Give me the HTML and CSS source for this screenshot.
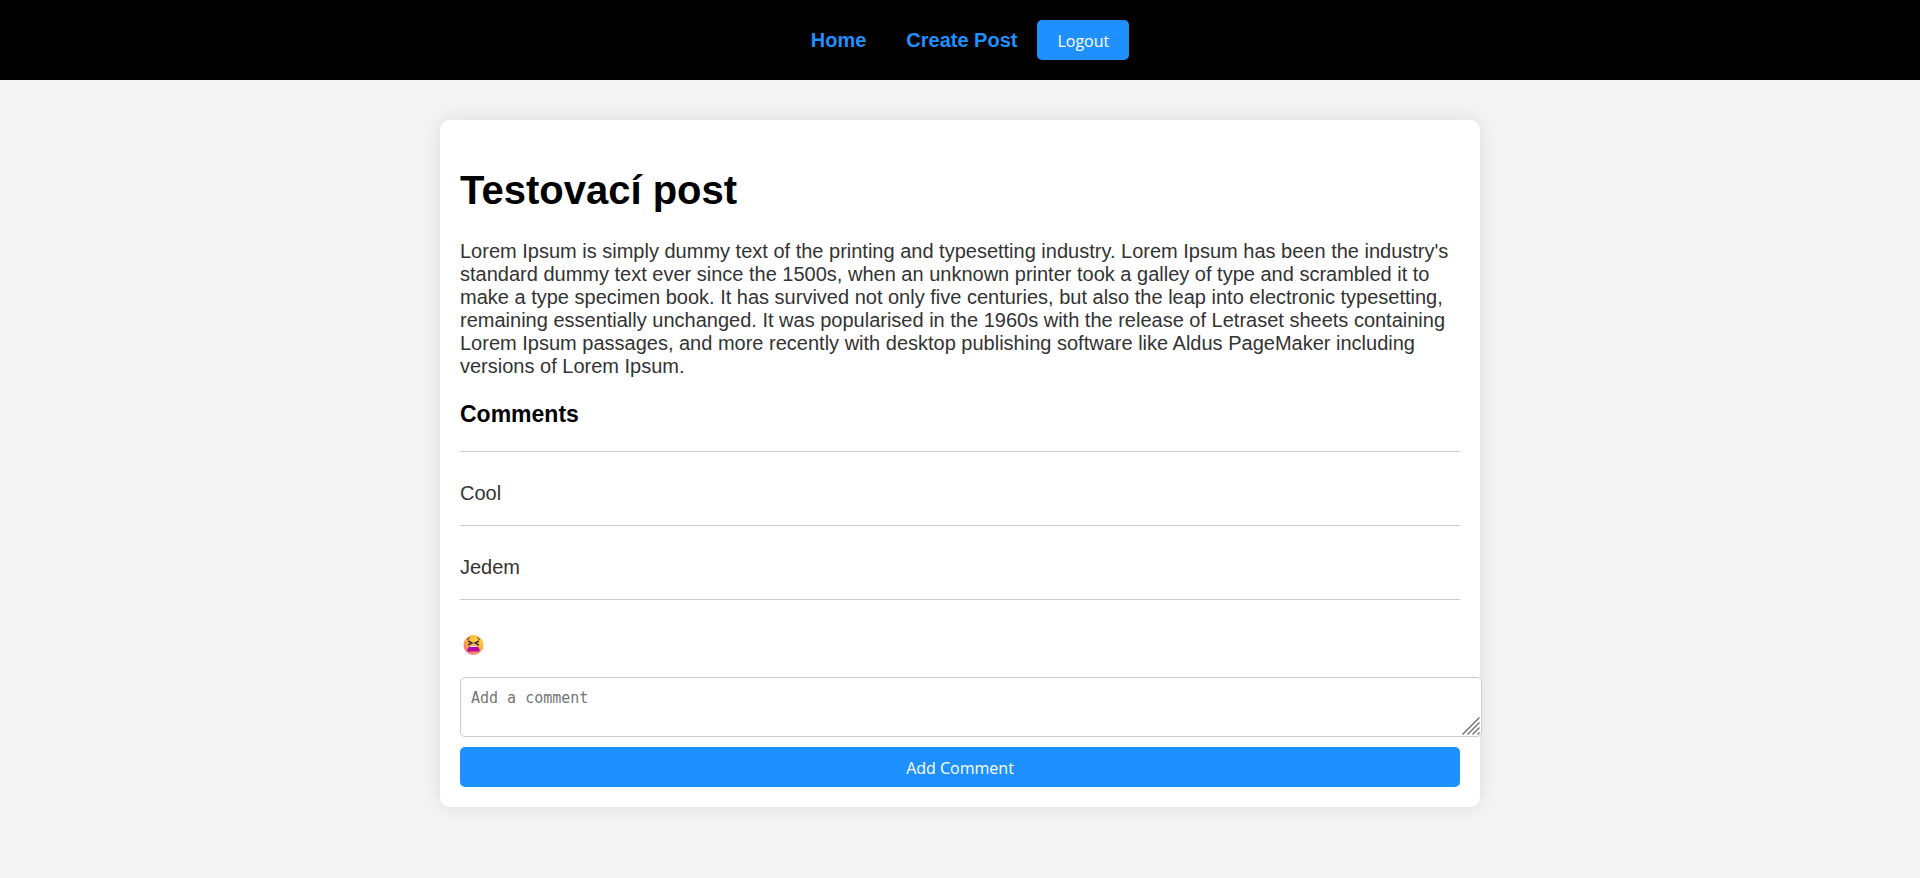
FILE: index.html
```html
<!DOCTYPE html>
<html lang="en">
<head>
<meta charset="utf-8">
<title>Testovací post</title>
<link rel="stylesheet" href="styles.css">
</head>
<body>
<nav class="navbar">
  <a class="nav-link" href="#home">Home</a>
  <a class="nav-link" href="#create">Create Post</a>
  <button class="button" type="button">Logout</button>
</nav>
<main class="post">
  <h1 class="post-title">Testovací post</h1>
  <p class="text">Lorem Ipsum is simply dummy text of the printing and typesetting industry. Lorem Ipsum has been the industry's standard dummy text ever since the 1500s, when an unknown printer took a galley of type and scrambled it to make a type specimen book. It has survived not only five centuries, but also the leap into electronic typesetting, remaining essentially unchanged. It was popularised in the 1960s with the release of Letraset sheets containing Lorem Ipsum passages, and more recently with desktop publishing software like Aldus PageMaker including versions of Lorem Ipsum.</p>
  <h3 class="comments-title">Comments</h3>
  <div class="comment"><p class="text">Cool</p></div>
  <div class="comment"><p class="text">Jedem</p></div>
  <div class="comment">
    <p class="text text-emoji">
      <svg class="emoji" viewBox="0 0 27 27" role="img" aria-label="Tired face">
        <defs>
          <radialGradient id="face" cx="0.65" cy="0.3" r="0.8">
            <stop offset="0" stop-color="#ffd748"/>
            <stop offset="0.6" stop-color="#fcae3c"/>
            <stop offset="1" stop-color="#f0609a"/>
          </radialGradient>
        </defs>
        <circle cx="13.5" cy="15" r="10" fill="url(#face)"/>
        <path d="M7 9.500q2-.3 2.500-2.200M20 9.500q-2-.3-2.500-2.200" stroke="#7a4528" stroke-width="1.2" fill="none"/>
        <path d="M8 11l4 2-4 2M19 11l-4 2 4 2" stroke="#4d2b35" stroke-width="1.500" fill="none"/>
        <path d="M7.500 21.500c-.5-3.500 2-6 6-6s6.500 2.500 6 6z" fill="#b400a6"/>
        <path d="M9.500 17q4-2.800 8 0z" fill="#fff"/>
      </svg>
    </p>
  </div>
  <form class="comment-form">
    <div class="field">
      <textarea class="comment-input" aria-label="Add a comment" placeholder="Add a comment"></textarea>
      <svg class="grip" viewBox="0 0 18 18" aria-hidden="true">
        <path d="M0.500 17.500l17-17M5.500 17.500l12-12M10.500 17.500l7-7M15.500 17.500l2-2" stroke="#6e6e6e" stroke-width="1.400"/>
      </svg>
    </div>
    <button class="button" type="submit">Add Comment</button>
  </form>
</main>
</body>
</html>
```

FILE: styles.css
```css
body {
  margin: 0;
  background: #f4f4f4;
  font-family: "Liberation Sans", Arial, sans-serif;
  font-size: 20px;
}

.navbar {
  display: flex;
  justify-content: center;
  align-items: center;
  padding: 20px;
  background: #000;
}

.nav-link {
  padding: 0 20px;
  color: #1e90ff;
  font-weight: bold;
  text-decoration: none;
}

.button {
  padding: 11px 20px 9px;
  border: 0;
  border-radius: 5px;
  background: #1e90ff;
  color: #fff;
  font-family: "Open Sans", sans-serif;
  font-size: 16px;
  line-height: 20px;
  cursor: pointer;
}

.post {
  max-width: 1000px;
  margin: 40px auto;
  padding: 20px;
  border-radius: 10px;
  background: #fff;
  box-shadow: 0 0 20px rgba(0, 0, 0, 0.1);
}

.post-title {
  margin: 27px 0;
  font-size: 40px;
  line-height: 46px;
}

.text {
  margin: 20px 0;
  color: #333;
  line-height: 23px;
}

.comments-title {
  margin: 23px 0;
  font-size: 23px;
  line-height: 27px;
}

.comment {
  padding-top: 10px;
  border-top: 1px solid #ccc;
}

.text-emoji {
  display: flex;
}

.emoji {
  width: 27px;
  height: 27px;
}

.comment-form {
  display: flex;
  flex-direction: column;
  gap: 10px;
}

.field {
  display: flex;
  position: relative;
  width: 100%;
}

.comment-input {
  flex: none;
  width: 100%;
  height: 38px;
  padding: 10px;
  border: 1px solid #ccc;
  border-radius: 5px;
  font-family: "DejaVu Sans Mono", monospace;
  font-size: 15px;
  line-height: 20px;
  resize: none;
}

.comment-input::placeholder {
  color: #757575;
}

.grip {
  position: absolute;
  right: -20px;
  bottom: 2px;
  width: 18px;
  height: 18px;
}
```
